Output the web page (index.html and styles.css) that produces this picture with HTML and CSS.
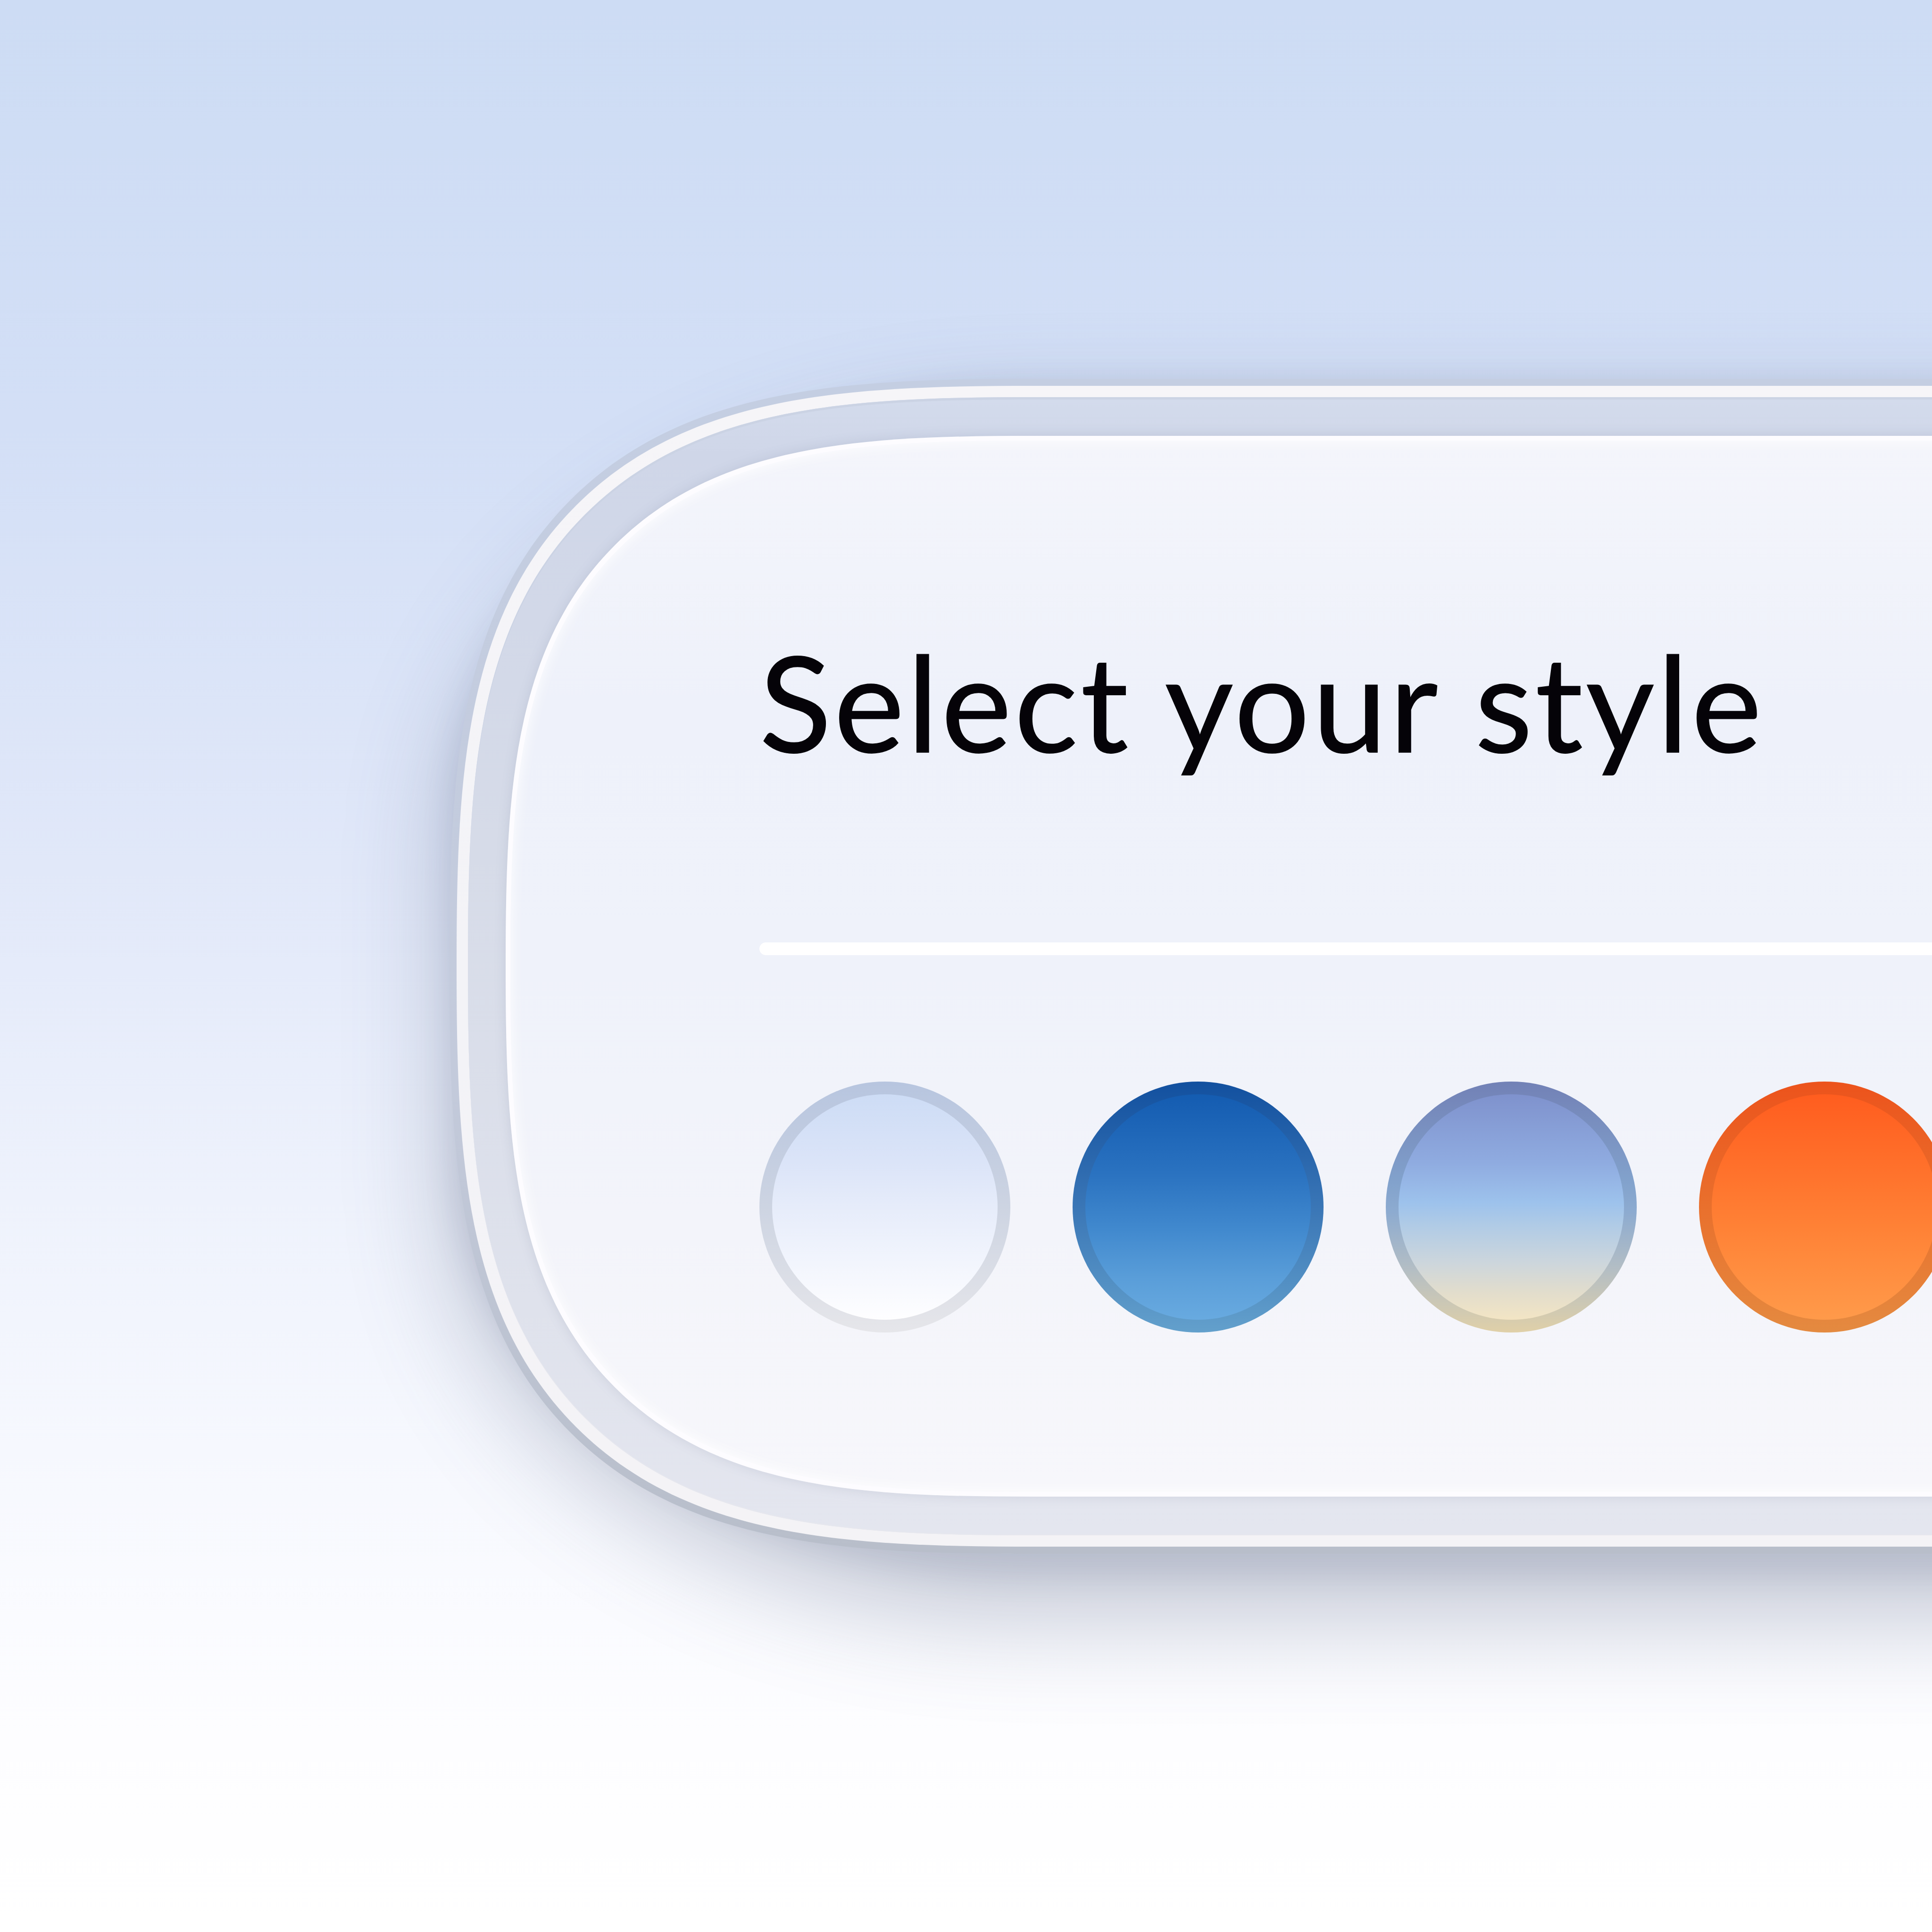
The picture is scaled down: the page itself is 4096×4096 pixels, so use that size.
FILE: index.html
```html
<!DOCTYPE html>
<html lang="en">
<head>
<meta charset="utf-8">
<title>Select your style</title>
<link rel="stylesheet" href="styles.css">
</head>
<body>
<main class="scene">
  <div class="panel">
    <section class="shell">
      <div class="rim">
        <div class="groove">
          <div class="card">
            <h1 class="title">Select your style</h1>
            <div class="divider"></div>
            <div class="swatches">
              <button class="swatch swatch--mist" aria-label="Mist"><span class="swatch__fill"></span></button>
              <button class="swatch swatch--ocean" aria-label="Ocean"><span class="swatch__fill"></span></button>
              <button class="swatch swatch--dawn" aria-label="Dawn"><span class="swatch__fill"></span></button>
              <button class="swatch swatch--sunset" aria-label="Sunset"><span class="swatch__fill"></span></button>
            </div>
          </div>
        </div>
      </div>
    </section>
  </div>
</main>
</body>
</html>
```

FILE: styles.css
```css
html, body {
  margin: 0;
  padding: 0;
}

body {
  width: 4096px;
  height: 4096px;
  overflow: hidden;
  font-family: "Lato", "Liberation Sans", sans-serif;
  background: linear-gradient(180deg, #cddcf4 0%, #d3dff6 22%, #e1e8f9 45%, #eef2fc 62%, #f6f8fe 75%, #fdfdff 90%, #ffffff 100%);
}

.scene {
  width: 4096px;
  height: 4096px;
  padding: 803px 0 0 953px;
  box-sizing: border-box;
  overflow: hidden;
}

/* soft drop shadow caster, tucked 20px inside the shell outline */
.panel {
  width: 5200px;
  margin: 20px 0 20px 20px;
  border-radius: 1200px / 880px;
  box-shadow: 0 110px 220px 20px rgba(80, 92, 125, 0.32), 0 30px 60px 20px rgba(80, 92, 125, 0.12);
}

.shell {
  margin: -20px 0 -20px -20px;
  padding: 15px;
  border-radius: 900px;
  background: linear-gradient(180deg, #c4cee2 0%, #c3cadb 60%, #b8beca 100%);
}

.rim {
  padding: 24px;
  border-radius: 885px;
  background: linear-gradient(180deg, #f6f5f8 0%, #f3f3f7 50%, #f4f3f6 100%);
}

.groove {
  padding: 82px 80px;
  border-radius: 861px;
  background: linear-gradient(180deg, #d3dbec 0%, #cfd6e8 5%, #d6dbe8 40%, #dfe2ec 80%, #e4e6ef 100%);
  box-shadow: inset 0 5px 0 #cbd3e4, inset 0 -2px 0 #e6e7ee;
}

.card {
  border-radius: 779px;
  padding: 412px 0 338px 528px;
  border: 10px solid #fdfcff;
  background: linear-gradient(180deg, #f4f5fb 0%, #eef1fa 25%, #eff2fa 50%, #f3f4fa 75%, #f7f7fb 100%);
  box-shadow: inset 0 0 30px rgba(255, 255, 255, 0.95), 0 0 24px rgba(110, 120, 150, 0.18);
}

@supports (corner-shape: superellipse(1.585)) {
  .shell {
    border-radius: 1244px;
    corner-shape: superellipse(1.585);
  }
  .rim {
    border-radius: 1229px;
    corner-shape: superellipse(1.585);
  }
  .groove {
    border-radius: 1205px;
    corner-shape: superellipse(1.585);
  }
  .card {
    border-radius: 1123px;
    corner-shape: superellipse(1.585);
  }
}

.title {
  margin: 0;
  font-family: "Lato", "Liberation Sans", sans-serif;
  font-weight: 400;
  font-size: 282px;
  line-height: 280px;
  letter-spacing: 6px;
  color: #050308;
  white-space: nowrap;
  -webkit-text-stroke: 1.5px #050308;
}

.divider {
  margin-top: 372px;
  height: 27px;
  border-radius: 14px;
  background: #ffffff;
}

.swatches {
  display: flex;
  gap: 132px;
  margin-top: 268px;
}

.swatch {
  flex: none;
  width: 532px;
  height: 532px;
  padding: 27px;
  border: 0;
  margin: 0;
  border-radius: 50%;
  box-sizing: border-box;
  display: block;
}

.swatch__fill {
  display: block;
  width: 100%;
  height: 100%;
  border-radius: 50%;
}

.swatch--mist {
  background: linear-gradient(180deg, #b7c5df 0%, #cdd4e2 50%, #e6e6ea 100%);
}
.swatch--mist .swatch__fill {
  background: linear-gradient(180deg, #cddcf5 0%, #dbe4f8 30%, #e6ecfa 50%, #f2f5fd 75%, #fefeff 100%);
}

.swatch--ocean {
  background: linear-gradient(180deg, #12509f 0%, #3a76b6 50%, #63a0cc 100%);
}
.swatch--ocean .swatch__fill {
  background: linear-gradient(180deg, #145cb1 0%, #2a72c0 35%, #4189ce 60%, #5a9ed9 82%, #68aae0 100%);
}

.swatch--dawn {
  background: linear-gradient(180deg, #7281b6 0%, #82a2cc 40%, #8dabd0 52%, #b4bec4 75%, #e0d0a8 100%);
}
.swatch--dawn .swatch__fill {
  background: linear-gradient(180deg, #7f92cd 0%, #8fabe0 30%, #9dc2ec 48%, #b0cbe6 58%, #cdd6dc 75%, #e2ddcc 88%, #f3e5c4 100%);
}

.swatch--sunset {
  background: linear-gradient(180deg, #ec531c 0%, #e9702d 50%, #e48a40 100%);
}
.swatch--sunset .swatch__fill {
  background: linear-gradient(180deg, #ff5d1f 0%, #ff6f2a 30%, #ff8236 60%, #ff9a4a 100%);
}
```
